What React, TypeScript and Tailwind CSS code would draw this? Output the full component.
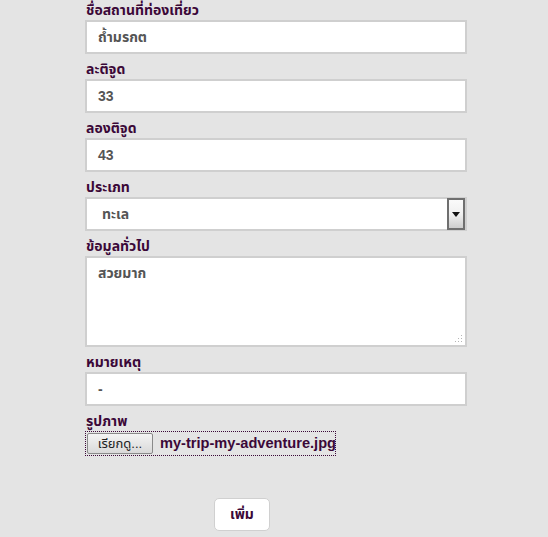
import React from 'react';

const font = "font-['Tahoma','Liberation_Sans','Noto_Sans_Thai','Noto_Sans',sans-serif]";

const Field: React.FC<{ label: string; children: React.ReactNode }> = ({ label, children }) => (
  <div className="flex flex-col mb-[5px]">
    <label className="h-5 pl-px text-[14px] leading-5 font-bold text-[#3b0838]">{label}</label>
    {children}
  </div>
);

const TextBox: React.FC<{ value: string }> = ({ value }) => (
  <div className="h-[34px] bg-white border-2 border-[#cfcfcf] px-[11px] flex items-center text-[14px] font-bold text-[#555]">
    {value}
  </div>
);

export default function App() {
  return (
    <div className={`min-h-[537px] w-[548px] bg-[#e4e4e4] ${font}`}>
      <div className="pl-[85px] w-[467px]">
        <Field label="ชื่อสถานที่ท่องเที่ยว">
          <TextBox value="ถ้ำมรกต" />
        </Field>
        <Field label="ละติจูด">
          <TextBox value="33" />
        </Field>
        <Field label="ลองติจูด">
          <TextBox value="43" />
        </Field>
        <Field label="ประเภท">
          <div className="h-[34px] bg-white border-2 border-[#cfcfcf] flex items-center">
            <span className="flex-1 pl-[15px] text-[14px] font-bold text-[#555]">ทะเล</span>
            <div className="w-[18px] h-[32px] border-2 border-[#6f6f6f] bg-gradient-to-b from-[#fafafa] via-[#f0f0f0] to-[#cdcdcd] flex items-center justify-center">
              <svg width="8" height="5" viewBox="0 0 8 5">
                <path d="M0 0h8L4 5z" fill="#111" />
              </svg>
            </div>
          </div>
        </Field>
        <Field label="ข้อมูลทั่วไป">
          <div className="relative h-[91px] bg-white border-2 border-[#cfcfcf] px-[11px] pt-[5px] text-[14px] font-bold text-[#555]">
            สวยมาก
            <svg className="absolute right-[2px] bottom-[2px]" width="8" height="8" viewBox="0 0 8 8">
              <g fill="#b5b5b5">
                <rect x="6" y="0" width="1" height="1" />
                <rect x="3" y="3" width="1" height="1" />
                <rect x="6" y="3" width="1" height="1" />
                <rect x="0" y="6" width="1" height="1" />
                <rect x="3" y="6" width="1" height="1" />
                <rect x="6" y="6" width="1" height="1" />
              </g>
            </svg>
          </div>
        </Field>
        <Field label="หมายเหตุ">
          <TextBox value="-" />
        </Field>
        <Field label="รูปภาพ">
          <div className="h-[25px] w-[251px] border border-dotted border-[#3b0838] flex items-center pl-px">
            <div className="shrink-0 h-[21px] w-[66px] border border-[#8a8a8a] rounded-[2px] bg-gradient-to-b from-[#f4f4f4] to-[#d9d9d9] flex items-center justify-center text-[13px] text-[#222]">
              เรียกดู...
            </div>
            <span className="ml-[7px] text-[14.6px] font-bold text-[#3b0838] whitespace-nowrap">my-trip-my-adventure.jpg</span>
          </div>
        </Field>
      </div>
      <div className="flex pl-[214px] pt-[37px]">
        <button className="w-[56px] h-[33px] bg-white border border-[#d0d0d0] rounded-[5px] text-[14px] font-bold text-[#3b0838]">
          เพิ่ม
        </button>
      </div>
    </div>
  );
}
